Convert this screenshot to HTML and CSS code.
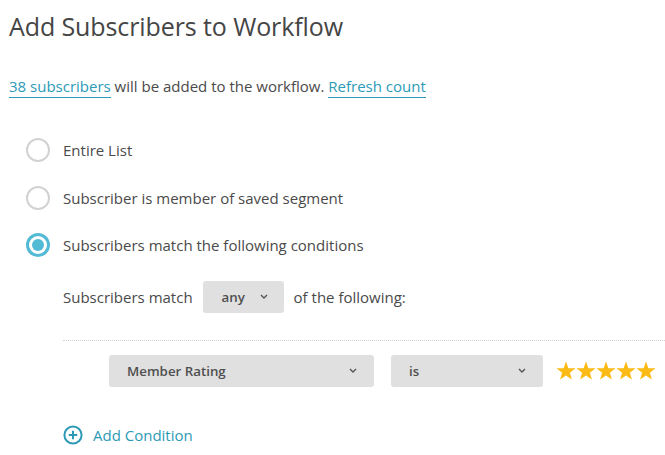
FILE: index.html
```html
<!DOCTYPE html>
<html>
<head>
<meta charset="utf-8">
<link rel="stylesheet" href="styles.css">
</head>
<body>
<div class="page">
  <h1 class="title">Add Subscribers to Workflow</h1>
  <p class="count"><a class="link" href="#">38 subscribers</a> will be added to the workflow. <a class="link" href="#">Refresh count</a></p>
  <div class="options">
    <label class="radio-row"><span class="radio"></span><span class="radio-label">Entire List</span></label>
    <label class="radio-row"><span class="radio"></span><span class="radio-label">Subscriber is member of saved segment</span></label>
    <label class="radio-row"><span class="radio radio-on"><span class="dot"></span></span><span class="radio-label">Subscribers match the following conditions</span></label>
    <div class="conditions">
      <div class="match-row">
        <span>Subscribers match</span>
        <span class="select select-any"><span class="select-text">any</span><svg class="chev" viewBox="0 0 8 5" width="8" height="5"><path d="M1 1 L4 4 L7 1" fill="none" stroke="#555" stroke-width="1.4"/></svg></span>
        <span>of the following:</span>
      </div>
      <div class="divider"></div>
      <div class="cond-row">
        <span class="select select-field"><span class="select-text">Member Rating</span><svg class="chev" viewBox="0 0 8 5" width="8" height="5"><path d="M1 1 L4 4 L7 1" fill="none" stroke="#555" stroke-width="1.4"/></svg></span>
        <span class="select select-op"><span class="select-text">is</span><svg class="chev" viewBox="0 0 8 5" width="8" height="5"><path d="M1 1 L4 4 L7 1" fill="none" stroke="#555" stroke-width="1.4"/></svg></span>
        <span class="stars">
          <svg viewBox="0 0 100 20" width="100" height="20">
            <g fill="#fbbb16">
              <polygon points="10,0.5 12.4,7.2 19.5,7.3 13.9,11.7 15.9,18.6 10,14.5 4.1,18.6 6.1,11.7 0.5,7.3 7.6,7.2"/>
              <polygon transform="translate(20,0)" points="10,0.5 12.4,7.2 19.5,7.3 13.9,11.7 15.9,18.6 10,14.5 4.1,18.6 6.1,11.7 0.5,7.3 7.6,7.2"/>
              <polygon transform="translate(40,0)" points="10,0.5 12.4,7.2 19.5,7.3 13.9,11.7 15.9,18.6 10,14.5 4.1,18.6 6.1,11.7 0.5,7.3 7.6,7.2"/>
              <polygon transform="translate(60,0)" points="10,0.5 12.4,7.2 19.5,7.3 13.9,11.7 15.9,18.6 10,14.5 4.1,18.6 6.1,11.7 0.5,7.3 7.6,7.2"/>
              <polygon transform="translate(80,0)" points="10,0.5 12.4,7.2 19.5,7.3 13.9,11.7 15.9,18.6 10,14.5 4.1,18.6 6.1,11.7 0.5,7.3 7.6,7.2"/>
            </g>
          </svg>
        </span>
      </div>
      <a class="add" href="#">
        <svg class="add-icon" viewBox="0 0 20 20" width="20" height="20"><circle cx="10" cy="10" r="8.6" fill="none" stroke="#2c9ab7" stroke-width="2"/><path d="M10 5.8 V14.2 M5.8 10 H14.2" stroke="#2c9ab7" stroke-width="2"/></svg>
        <span>Add Condition</span>
      </a>
    </div>
  </div>
</div>
</body>
</html>
```
FILE: styles.css
```css
* { box-sizing: border-box; }
html, body { margin: 0; padding: 0; background: #fff; }
body {
  font-family: "Open Sans", "DejaVu Sans", sans-serif;
  color: #4a4a4a;
  font-size: 15px;
  overflow: hidden;
}
.page { padding: 0 0 0 9px; }
.title {
  margin: 0;
  padding-top: 6px;
  font-size: 25px;
  font-weight: 400;
  line-height: 40px;
  color: #454545;
  letter-spacing: -0.1px;
}
.count {
  margin: 29px 0 0 0;
  line-height: 22px;
  font-size: 15px;
  color: #4a4a4a;
}
.link {
  color: #2c9ab7;
  text-decoration: none;
  border-bottom: 1px solid #2c9ab7;
  padding-bottom: 1px;
}
.options {
  padding-left: 17px;
  margin-top: 41px;
}
.radio-row {
  display: flex;
  align-items: center;
  height: 24px;
  margin-bottom: 23.5px;
}
.radio {
  width: 24px;
  height: 24px;
  border-radius: 50%;
  border: 2px solid #d2d2d2;
  display: flex;
  align-items: center;
  justify-content: center;
  flex: none;
}
.radio-on { border: 3px solid #52bad5; }
.dot {
  width: 12px;
  height: 12px;
  border-radius: 50%;
  background: #52bad5;
}
.radio-label { margin-left: 13px; }
.conditions { padding-left: 37px; margin-top: 16px; }
.match-row {
  display: flex;
  align-items: center;
  height: 32px;
}
.select {
  display: inline-flex;
  align-items: center;
  justify-content: space-between;
  background: #e0e0e0;
  border-radius: 3px;
  height: 32px;
  font-size: 13.3px;
  font-weight: 600;
  color: #4f4f4f;
}
.select-any { width: 81px; margin: 0 10px 0 10px; padding: 0 16px 0 19px; }
.divider {
  margin-top: 27px;
  border-top: 1px dotted #d4d4d4;
  margin-right: -10px;
}
.cond-row {
  display: flex;
  align-items: center;
  margin-top: 14px;
  padding-left: 46px;
}
.select-field { width: 265px; padding: 0 17px 0 18px; }
.select-op { width: 152px; padding: 0 17px 0 18px; margin-left: 17px; }
.stars { margin-left: 13px; display: flex; }
.stars svg { display: block; }
.chev { display: block; }
.add {
  display: flex;
  align-items: center;
  margin-top: 38px;
  color: #2c9ab7;
  text-decoration: none;
  font-size: 15px;
}
.add-icon { display: block; margin-right: 10px; }
```
